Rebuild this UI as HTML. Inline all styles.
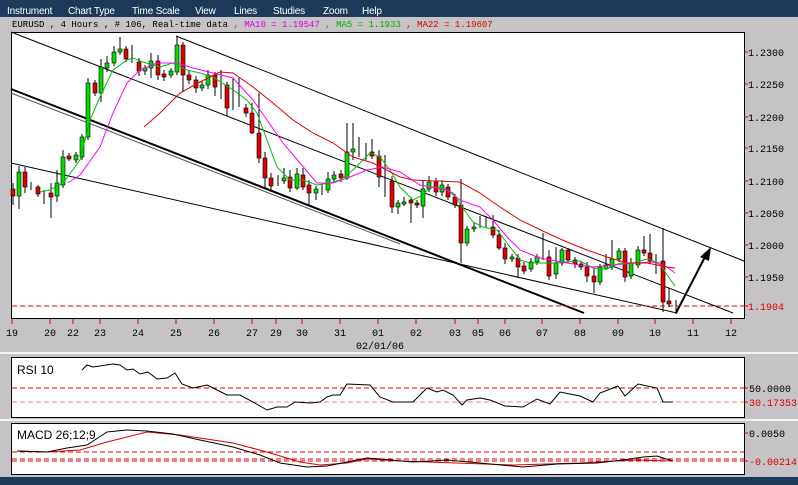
<!DOCTYPE html>
<html><head><meta charset="utf-8"><style>
html,body{margin:0;padding:0;width:798px;height:485px;overflow:hidden;background:#c6c3c6}
svg{display:block}
text{font-family:"Liberation Mono",monospace;font-size:10px}
.m{font-family:"Liberation Sans",sans-serif;font-size:10px;fill:#fff;letter-spacing:-0.2px}
</style></head><body>
<svg width="798" height="485" viewBox="0 0 798 485" xmlns="http://www.w3.org/2000/svg">
<rect x="0" y="0" width="798" height="485" fill="#c6c3c6"/>
<rect x="0" y="0" width="798" height="17" fill="#1c3a5a"/>
<text class="m" x="7" y="14">Instrument</text>
<text class="m" x="68" y="14">Chart Type</text>
<text class="m" x="132" y="14">Time Scale</text>
<text class="m" x="195" y="14">View</text>
<text class="m" x="234" y="14">Lines</text>
<text class="m" x="273" y="14">Studies</text>
<text class="m" x="323" y="14">Zoom</text>
<text class="m" x="362" y="14">Help</text>
<text x="12" y="27" style="font-size:9px"><tspan fill="#000">EURUSD , 4 Hours , # 106, Real-time data</tspan><tspan fill="#e000e0"> , MA10 = 1.19547</tspan><tspan fill="#00b000"> , MA5 = 1.1933</tspan><tspan fill="#e00000"> , MA22 = 1.19607</tspan></text>

<rect x="11.5" y="32.5" width="733" height="286" fill="#fff" stroke="#000"/>
<g stroke="#000" fill="none">
<line x1="176" y1="36" x2="744" y2="261" stroke-width="1"/>
<line x1="11" y1="32" x2="733" y2="313"/>
<line x1="11" y1="89" x2="584" y2="313" stroke-width="2"/>
<line x1="11" y1="93" x2="400" y2="244" stroke="#555"/>
<line x1="11" y1="163" x2="677" y2="313"/>
<line x1="676" y1="313" x2="706" y2="255" stroke-width="2"/>
</g>
<polygon points="711,247 700,257 709,261" fill="#000"/>
<line x1="12" y1="306" x2="744" y2="306" stroke="#e00000" stroke-dasharray="5,3"/>

<path stroke="#000" fill="none" d="M13 183V205M19 166V209M25 167V193M31 182V190M38 185V197M44 190V204M51 183V218M57 170V202M63 150V188M69 153V161M76 152V163M82 134V160M88 78V140M95 80V96M101 59V102M107 56V72M114 46V66M120 37V55M126 46V62M132 45V63M139 58V76M145 65V75M151 53V78M158 55V80M164 70V81M171 68V78M177 36V75M183 42V92M189 71V84M196 76V93M202 81V91M208 70V89M215 72V96M221 70V99M227 82V116M233 78V110M239 78V107M246 104V117M252 103V134M259 93V163M265 152V188M271 173V192M278 175V186M284 168V184M290 170V192M297 168V190M303 168V190M309 180V205M316 186V200M322 184V195M328 172V193M334 171V182M341 170V182M347 123V180M353 123V160M359 137V157M366 143V160M372 139V159M379 150V187M385 155V197M392 176V213M398 200V214M404 197V206M411 197V223M417 200V208M423 180V218M429 176V192M436 178V196M442 180V196M448 184V200M455 194V208M461 179V263M467 226V246M474 222V232M480 216V228M486 216V228M493 215V238M499 230V250M505 243V264M512 254V262M518 254V278M524 262V274M531 258V272M537 254V265M543 233V260M549 250V280M556 247V279M562 248V266M568 248V263M575 257V268M581 261V270M587 262V282M594 268V293M600 264V285M606 254V270M612 240V270M619 248V262M625 248V282M631 258V279M638 246V268M644 236V256M650 234V264M656 254V274M663 228V312M669 288V307M676 300V314"/>
<g fill="#00dd00" stroke="#000" stroke-width="0.6">
<rect x="17" y="172" width="4" height="24"/><rect x="61" y="157" width="4" height="28"/><rect x="55" y="183" width="4" height="13"/><rect x="74" y="155" width="4" height="5"/><rect x="80" y="137" width="4" height="20"/><rect x="86" y="83" width="4" height="54"/><rect x="99" y="67" width="4" height="26"/><rect x="105" y="63" width="4" height="5"/><rect x="112" y="52" width="4" height="11"/><rect x="118" y="49" width="4" height="3"/><rect x="143" y="68" width="4" height="3"/><rect x="149" y="61" width="4" height="7"/><rect x="169" y="71" width="4" height="4"/><rect x="175" y="45" width="4" height="27"/><rect x="200" y="85" width="4" height="3"/><rect x="206" y="75" width="4" height="10"/><rect x="282" y="178" width="4" height="3"/><rect x="295" y="174" width="4" height="14"/><rect x="314" y="189" width="4" height="4"/><rect x="326" y="179" width="4" height="11"/><rect x="332" y="175" width="4" height="4"/><rect x="345" y="152" width="4" height="26"/><rect x="351" y="149" width="4" height="3"/><rect x="396" y="203" width="4" height="4"/><rect x="402" y="202" width="4" height="2"/><rect x="421" y="189" width="4" height="17"/><rect x="427" y="182" width="4" height="7"/><rect x="440" y="185" width="4" height="7"/><rect x="465" y="229" width="4" height="14"/><rect x="472" y="227" width="4" height="2"/><rect x="510" y="257" width="4" height="2"/><rect x="529" y="262" width="4" height="7"/><rect x="535" y="257" width="4" height="5"/><rect x="554" y="263" width="4" height="11"/><rect x="560" y="250" width="4" height="13"/><rect x="598" y="267" width="4" height="15"/><rect x="604" y="265" width="4" height="4"/><rect x="610" y="259" width="4" height="8"/><rect x="617" y="251" width="4" height="8"/><rect x="629" y="263" width="4" height="13"/><rect x="636" y="250" width="4" height="15"/>
</g>
<g fill="#e00000" stroke="#000" stroke-width="0.6">
<rect x="11" y="189" width="4" height="7"/><rect x="23" y="172" width="4" height="15"/><rect x="36" y="187" width="4" height="7"/><rect x="49" y="193" width="4" height="4"/><rect x="67" y="156" width="4" height="3"/><rect x="93" y="83" width="4" height="10"/><rect x="124" y="49" width="4" height="10"/><rect x="137" y="62" width="4" height="9"/><rect x="156" y="61" width="4" height="14"/><rect x="162" y="74" width="4" height="3"/><rect x="181" y="45" width="4" height="30"/><rect x="187" y="75" width="4" height="5"/><rect x="194" y="80" width="4" height="8"/><rect x="213" y="75" width="4" height="12"/><rect x="225" y="85" width="4" height="23"/><rect x="244" y="108" width="4" height="5"/><rect x="250" y="113" width="4" height="20"/><rect x="257" y="133" width="4" height="25"/><rect x="263" y="158" width="4" height="20"/><rect x="269" y="178" width="4" height="8"/><rect x="288" y="177" width="4" height="11"/><rect x="301" y="175" width="4" height="12"/><rect x="307" y="185" width="4" height="8"/><rect x="339" y="174" width="4" height="4"/><rect x="370" y="152" width="4" height="4"/><rect x="377" y="156" width="4" height="21"/><rect x="390" y="181" width="4" height="26"/><rect x="409" y="200" width="4" height="3"/><rect x="415" y="203" width="4" height="2"/><rect x="434" y="182" width="4" height="10"/><rect x="446" y="187" width="4" height="10"/><rect x="453" y="197" width="4" height="8"/><rect x="459" y="205" width="4" height="38"/><rect x="491" y="227" width="4" height="8"/><rect x="497" y="235" width="4" height="13"/><rect x="503" y="248" width="4" height="11"/><rect x="516" y="258" width="4" height="9"/><rect x="522" y="266" width="4" height="5"/><rect x="547" y="257" width="4" height="19"/><rect x="566" y="250" width="4" height="10"/><rect x="573" y="260" width="4" height="4"/><rect x="579" y="264" width="4" height="3"/><rect x="585" y="267" width="4" height="9"/><rect x="592" y="276" width="4" height="6"/><rect x="623" y="251" width="4" height="26"/><rect x="642" y="250" width="4" height="3"/><rect x="648" y="253" width="4" height="8"/><rect x="661" y="261" width="4" height="41"/><rect x="667" y="301" width="4" height="3"/>
</g>
<polyline fill="none" stroke="#00c000" points="40,192 50,190 63,183 80,160 90,120 100,97 113,70 127,60 133,58 143,62 160,67 173,63 187,70 200,73 213,77 233,90 247,100 257,113 267,140 277,167 290,180 303,180 317,185 330,183 340,180 353,170 370,153 380,157 390,170 400,187 413,200 423,195 430,187 443,188 453,193 463,208 473,222 483,227 497,230 507,243 520,260 530,263 553,263 580,261 593,268 607,269 620,263 633,263 647,259 660,263 667,275 675,286"/>
<polyline fill="none" stroke="#ff00ff" points="68,183 80,175 100,147 113,113 127,83 140,70 157,63 177,63 193,68 213,73 233,78 253,100 267,120 283,143 300,163 317,183 333,183 350,177 367,170 383,167 400,172 420,185 447,190 460,200 480,207 493,220 507,237 520,250 540,258 567,263 593,267 613,265 633,263 653,262 667,267 675,273"/>
<polyline fill="none" stroke="#e00000" points="144,127 160,113 180,93 200,82 220,72 233,73 253,87 273,103 293,120 313,133 333,143 353,157 373,163 400,177 413,180 460,182 480,193 500,207 520,220 547,233 567,242 587,250 607,257 627,263 647,263 667,267 675,268"/>

<g stroke="#e00000"><path d="M744 52H748M744 84H748M744 117H748M744 148H748M744 181H748M744 213H748M744 245H748M744 277H748M744 306H748"/></g>
<g fill="#000"><text x="748" y="56">1.2300</text><text x="748" y="88">1.2250</text><text x="748" y="121">1.2200</text><text x="748" y="152">1.2150</text><text x="748" y="185">1.2100</text><text x="748" y="217">1.2050</text><text x="748" y="249">1.2000</text><text x="748" y="281">1.1950</text></g>
<text x="748" y="310" fill="#e00000">1.1904</text>
<path stroke="#e00000" d="M12 319V324M50 319V324M73 319V324M100 319V324M138 319V324M176 319V324M214 319V324M252 319V324M276 319V324M302 319V324M340 319V324M378 319V324M416 319V324M455 319V324M478 319V324M505 319V324M542 319V324M580 319V324M618 319V324M655 319V324M693 319V324M731 319V324"/>
<g fill="#000" text-anchor="middle"><text x="12" y="336">19</text><text x="50" y="336">20</text><text x="73" y="336">22</text><text x="100" y="336">23</text><text x="138" y="336">24</text><text x="176" y="336">25</text><text x="214" y="336">26</text><text x="252" y="336">27</text><text x="276" y="336">29</text><text x="302" y="336">30</text><text x="340" y="336">31</text><text x="378" y="336">01</text><text x="416" y="336">02</text><text x="455" y="336">03</text><text x="478" y="336">05</text><text x="505" y="336">06</text><text x="542" y="336">07</text><text x="580" y="336">08</text><text x="618" y="336">09</text><text x="655" y="336">10</text><text x="693" y="336">11</text><text x="731" y="336">12</text></g>
<text x="356" y="349" fill="#000">02/01/06</text>
<rect x="0" y="352" width="798" height="2" fill="#f4f4f4"/>

<rect x="11.5" y="357.5" width="733" height="60" fill="#fff" stroke="#000"/>
<text x="17" y="374" style="font-family:'Liberation Sans',sans-serif;font-size:12px">RSI 10</text>
<line x1="12" y1="388" x2="744" y2="388" stroke="#e00000" stroke-dasharray="5,3"/>
<line x1="12" y1="402" x2="744" y2="402" stroke="#f08080" stroke-dasharray="5,3"/>
<polyline fill="none" stroke="#000" points="82,370 87,365 93,367 113,364 120,365 127,370 133,369 140,374 148,372 157,379 167,378 175,373 182,384 193,388 207,385 213,388 227,395 240,395 253,402 267,410 277,407 287,407 295,402 310,403 320,402 327,397 333,395 340,395 347,384 370,385 380,397 393,402 413,402 427,388 437,392 443,390 453,395 462,405 467,400 480,398 490,400 505,406 523,407 537,399 550,404 560,392 580,396 593,402 600,393 613,388 618,386 625,396 638,384 657,388 663,402 673,402"/>
<path stroke="#e00000" d="M744 388H748M744 402H748"/>
<text x="749" y="392" fill="#000">50.0000</text>
<text x="749" y="406" fill="#e00000">30.17353</text>
<rect x="0" y="419" width="798" height="2" fill="#f4f4f4"/>

<rect x="11.5" y="423.5" width="733" height="51" fill="#fff" stroke="#000"/>
<text x="17" y="439" style="font-family:'Liberation Sans',sans-serif;font-size:12px">MACD 26;12;9</text>
<g stroke="#e00000" stroke-dasharray="5,3"><line x1="12" y1="452" x2="744" y2="452"/><line x1="12" y1="459" x2="744" y2="459"/><line x1="12" y1="461" x2="744" y2="461"/></g>
<polyline fill="none" stroke="#e00000" points="17,451 47,452 80,450 107,442 147,432 180,435 233,443 267,452 300,462 320,465 347,463 367,459 400,461 513,465 580,463 633,460 673,461"/>
<polyline fill="none" stroke="#000" points="17,451 47,452 67,448 87,445 107,432 127,430 147,431 173,434 200,440 233,447 260,455 280,463 307,467 327,466 347,462 367,458 380,459 413,462 447,460 480,463 523,467 557,464 597,463 623,460 643,457 657,456 673,461"/>
<path stroke="#e00000" d="M744 433H748M744 461H748"/>
<text x="749" y="437" fill="#000">0.0050</text>
<text x="749" y="465" fill="#e00000">-0.00214</text>

<rect x="0" y="477" width="798" height="8" fill="#1c3a5a"/>
</svg>
</body></html>
